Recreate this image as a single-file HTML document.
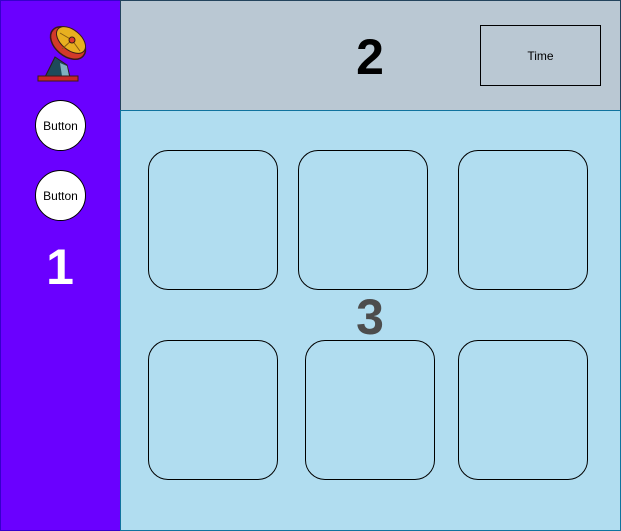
<!DOCTYPE html>
<html><head><style>
body{margin:0;width:621px;height:531px;position:relative;overflow:hidden;background:#fff;font-family:"Liberation Sans",sans-serif}
div{position:absolute;box-sizing:border-box}
.side{left:0;top:0;width:121px;height:531px;background:#6a00ff;border:1px solid #3700cc}
.head{left:120px;top:0;width:501px;height:111px;background:#bac8d3;border:1px solid #23445d}
.main{left:120px;top:110px;width:501px;height:421px;background:#b1ddf0;border:1px solid #10739e}
.btn{width:51px;height:51px;border-radius:50%;background:#fff;border:1px solid #000;font-size:12px;display:flex;align-items:center;justify-content:center;color:#000}
.box{width:130px;height:140px;border:1px solid #000;border-radius:20px}
.big{font-weight:bold;font-size:50px;width:100px;text-align:center;line-height:50px}
</style></head><body>
<div class="side"></div>
<div class="head"></div>
<div class="main"></div>
<svg style="position:absolute;left:30px;top:15px" width="70" height="75" viewBox="0 0 70 75">
<polygon points="15,62 25,42 37,50 40,62" fill="#1e4a5a" stroke="#2a1a1a" stroke-width="1"/>
<polygon points="30,48 37,51 39,61 32,61" fill="#7fb0c0"/>
<rect x="8" y="61" width="40" height="5" fill="#c8282a" stroke="#3a1a1a" stroke-width="1"/>
<ellipse cx="38" cy="28" rx="20" ry="13" transform="rotate(40 38 28)" fill="#d23a2a" stroke="#3a1a1a" stroke-width="1.5"/>
<ellipse cx="41" cy="25" rx="17" ry="10" transform="rotate(40 41 25)" fill="#e8b020" stroke="#3a1a1a" stroke-width="1"/>
<path d="M42 25 L32 34 M42 25 L50 36 M42 25 L30 18" stroke="#8a5a10" stroke-width="1"/>
<circle cx="42" cy="25" r="3" fill="#e03a2a" stroke="#3a1a1a"/>
</svg>
<div class="btn" style="left:35px;top:100px">Button</div>
<div class="btn" style="left:35px;top:170px">Button</div>
<div class="big" style="left:10px;top:242px;color:#fff">1</div>
<div class="big" style="left:320px;top:32px;color:#000">2</div>
<div style="left:480px;top:25px;width:121px;height:61px;border:1px solid #000;font-size:12px;display:flex;align-items:center;justify-content:center">Time</div>
<div class="box" style="left:148px;top:150px"></div>
<div class="box" style="left:298px;top:150px"></div>
<div class="box" style="left:458px;top:150px"></div>
<div class="box" style="left:148px;top:340px"></div>
<div class="box" style="left:305px;top:340px"></div>
<div class="box" style="left:458px;top:340px"></div>
<div class="big" style="left:320px;top:292px;color:#4d4d4d">3</div>
</body></html>
